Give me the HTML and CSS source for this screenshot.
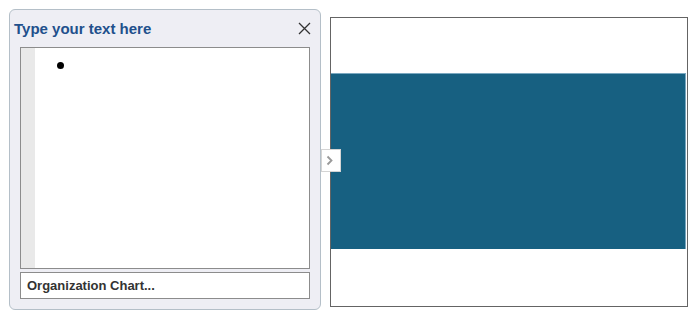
FILE: index.html
```html
<!DOCTYPE html>
<html lang="en">
<head>
    <meta charset="UTF-8">
    <title>Organization Chart</title>
    <link rel="stylesheet" href="styles.css">
</head>
<body>
    <div class="workspace">
        <!-- Text pane -->
        <div class="text-pane">
            <div class="pane-header">
                <span class="pane-title">Type your text here</span>
                <button class="close-btn" type="button" aria-label="Close">
                    <svg width="13" height="13" viewBox="0 0 13 13">
                        <path d="M1 1 L12 12 M12 1 L1 12" stroke="#333" stroke-width="1.3" fill="none"/>
                    </svg>
                </button>
            </div>
            <div class="text-box">
                <div class="gutter"></div>
                <ul class="bullets">
                    <li></li>
                </ul>
            </div>
            <div class="layout-name">Organization Chart...</div>

            <button class="toggle-btn" type="button" aria-label="Hide text pane">
                <svg width="8" height="11" viewBox="0 0 8 11">
                    <path d="M1.5 1.5 L5.5 5.5 L1.5 9.5" stroke="#999" stroke-width="1.8" fill="none"/>
                </svg>
            </button>
        </div>

        <!-- Chart -->
        <div class="chart">
            <div class="shape"></div>
        </div>
    </div>
</body>
</html>
```

FILE: styles.css
```css
body {
    margin: 0;
    background: #fff;
    font-family: "Liberation Sans", Arial, sans-serif;
}
.workspace {
    display: flex;
    align-items: flex-start;
    padding: 9px 0 0 9px;
}
.text-pane {
    position: relative;
    box-sizing: border-box;
    width: 312px;
    height: 301px;
    padding: 0 10px 10px 10px;
    border: 1px solid #b4bfc8;
    border-radius: 6px;
    background: #eeeef4;
    display: flex;
    flex-direction: column;
}
.pane-header {
    height: 37px;
    display: flex;
    align-items: center;
    justify-content: space-between;
    margin-left: -6px;
    margin-right: -1px;
    box-sizing: border-box;
}
.pane-title {
    font-size: 15px;
    font-weight: bold;
    color: #21508c;
}
.close-btn {
    border: none;
    background: none;
    padding: 0;
    width: 13px;
    height: 13px;
    display: flex;
    cursor: pointer;
}
.text-box {
    box-sizing: border-box;
    height: 223px;
    border: 1px solid #8c8c8c;
    background: #fff;
    display: flex;
}
.gutter {
    width: 14px;
    background: #e9e9e9;
}
.bullets {
    margin: 0;
    padding: 14px 0 0 22px;
    list-style: none;
}
.bullets li {
    width: 7px;
    height: 7px;
    border-radius: 50%;
    background: #000;
}
.layout-name {
    box-sizing: border-box;
    height: 27px;
    margin-top: 3px;
    padding: 0 6px;
    border: 1px solid #8c8c8c;
    background: #fff;
    font-size: 13px;
    font-weight: bold;
    color: #333;
    display: flex;
    align-items: center;
}
.toggle-btn {
    position: absolute;
    left: 311px;
    top: 139px;
    box-sizing: border-box;
    width: 20px;
    height: 23px;
    padding: 0 2px 0 0;
    border: 1px solid #d4d4d4;
    background: #fff;
    display: flex;
    align-items: center;
    justify-content: center;
    cursor: pointer;
}
.chart {
    box-sizing: border-box;
    width: 358px;
    height: 290px;
    margin: 8px 0 0 9px;
    border: 1px solid #646464;
    background: #fff;
    padding-top: 55px;
}
.shape {
    box-sizing: border-box;
    height: 176px;
    margin-right: 1px;
    background: #176081;
    border-top: 1px solid #7aa8c0;
    border-right: 1px solid #7aa8c0;
}
```
